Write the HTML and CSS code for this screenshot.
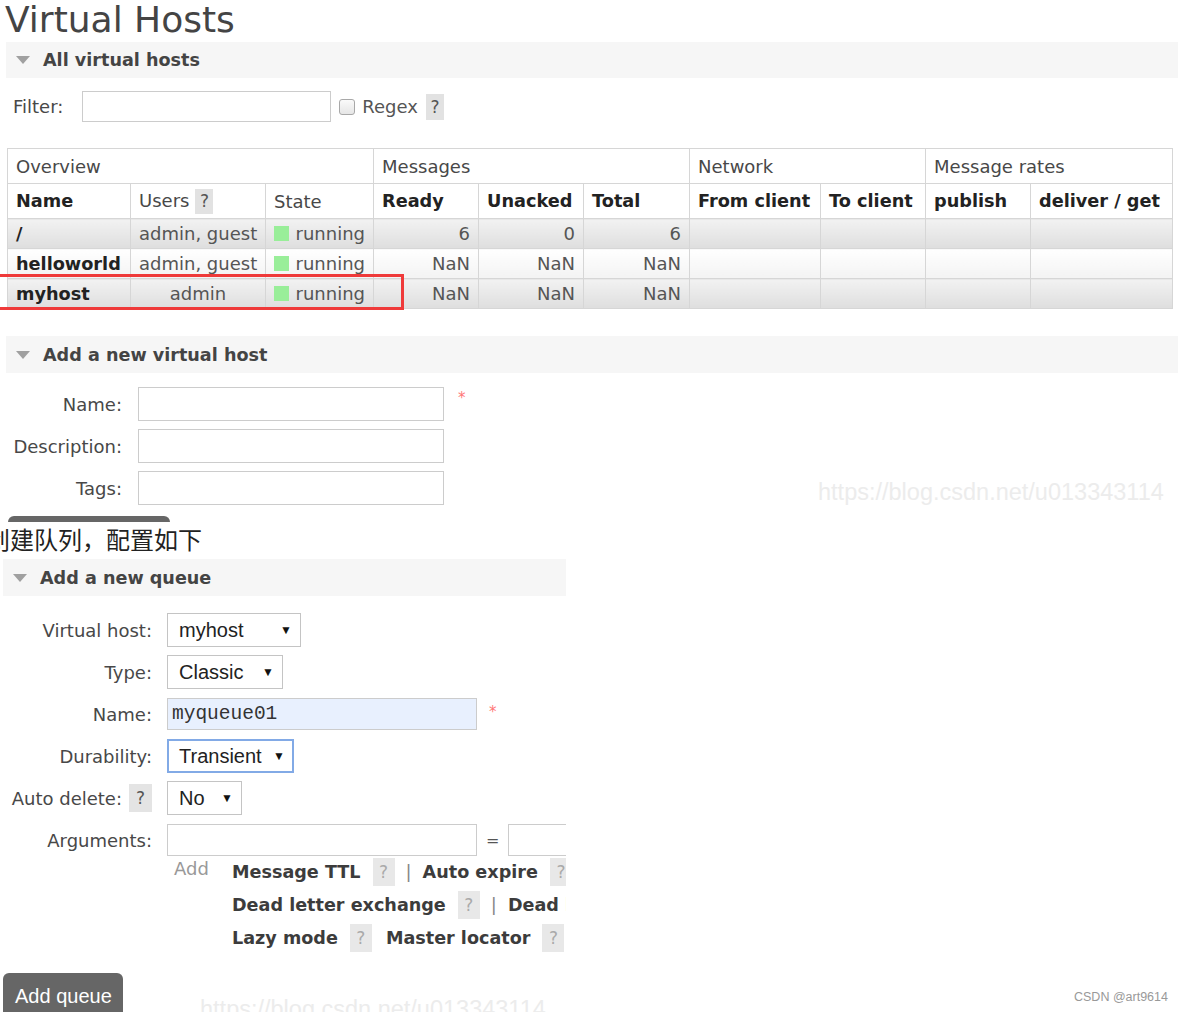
FILE: index.html
```html
<!DOCTYPE html>
<html lang="en">
<head>
<meta charset="utf-8">
<title>Virtual Hosts</title>
<link rel="stylesheet" href="styles.css">
</head>
<body>
<div class="page">
  <h1 class="title">Virtual Hosts</h1>

  <div class="section-bar wide">
    <span class="tri"></span><h2>All virtual hosts</h2>
  </div>

  <div class="filter">
    <span class="filter-label">Filter:</span>
    <span class="field filter-input"></span>
    <span class="checkbox"></span>
    <span class="regex">Regex</span>
    <span class="help">?</span>
  </div>

  <table class="list">
    <colgroup>
      <col class="c-name"><col class="c-users"><col class="c-state">
      <col class="c-num"><col class="c-num"><col class="c-total">
      <col class="c-from"><col class="c-num"><col class="c-num"><col class="c-deliver">
    </colgroup>
    <thead>
      <tr class="group-row">
        <th colspan="3">Overview</th>
        <th colspan="3">Messages</th>
        <th colspan="2">Network</th>
        <th colspan="2">Message rates</th>
      </tr>
      <tr class="head-row">
        <th class="b">Name</th>
        <th>Users<span class="help help-sm">?</span></th>
        <th>State</th>
        <th class="b">Ready</th>
        <th class="b">Unacked</th>
        <th class="b">Total</th>
        <th class="b">From client</th>
        <th class="b">To client</th>
        <th class="b">publish</th>
        <th class="b">deliver / get</th>
      </tr>
    </thead>
    <tbody>
      <tr class="alt1">
        <td class="name">/</td><td class="users">admin, guest</td>
        <td><span class="state"><span class="dot"></span>running</span></td>
        <td class="num">6</td><td class="num">0</td><td class="num">6</td>
        <td></td><td></td><td></td><td></td>
      </tr>
      <tr class="alt0">
        <td class="name">helloworld</td><td class="users">admin, guest</td>
        <td><span class="state"><span class="dot"></span>running</span></td>
        <td class="num">NaN</td><td class="num">NaN</td><td class="num">NaN</td>
        <td></td><td></td><td></td><td></td>
      </tr>
      <tr class="alt1">
        <td class="name">myhost</td><td class="users">admin</td>
        <td><span class="state"><span class="dot"></span>running</span></td>
        <td class="num">NaN</td><td class="num">NaN</td><td class="num">NaN</td>
        <td></td><td></td><td></td><td></td>
      </tr>
    </tbody>
  </table>

  <div class="section-bar wide bar-vh">
    <span class="tri"></span><h2>Add a new virtual host</h2>
  </div>

  <div class="vh-form">
    <span class="lbl">Name:</span><span class="field vh-input"></span><span class="req">*</span>
    <span class="lbl">Description:</span><span class="field vh-input"></span><span></span>
    <span class="lbl">Tags:</span><span class="field vh-input"></span><span></span>
  </div>
  <div class="btn-stub"></div>

  <p class="cn">创建队列，配置如下</p>

  <div class="queue-panel">
    <div class="section-bar q-bar">
      <span class="tri"></span><h2>Add a new queue</h2>
    </div>

    <div class="q-form">
      <span class="lbl">Virtual host:</span>
      <div class="ctl"><span class="select w-host"><span>myhost</span><span class="arrow">▼</span></span></div>

      <span class="lbl">Type:</span>
      <div class="ctl"><span class="select w-type"><span>Classic</span><span class="arrow">▼</span></span></div>

      <span class="lbl">Name:</span>
      <div class="ctl"><span class="field q-name">myqueue01</span><span class="req q-req">*</span></div>

      <span class="lbl">Durability:</span>
      <div class="ctl"><span class="select w-dur focus"><span>Transient</span><span class="arrow">▼</span></span></div>

      <span class="lbl">Auto delete: <span class="help help-q">?</span></span>
      <div class="ctl"><span class="select w-no"><span>No</span><span class="arrow">▼</span></span></div>

      <span class="lbl">Arguments:</span>
      <div class="ctl"><span class="field q-arg"></span><span class="eq">=</span><span class="field q-arg2"></span></div>
    </div>

    <div class="adds">
      <span class="add-link">Add</span>
      <div class="opts">
        <div class="opt-line"><b>Message TTL</b><span class="help help-o">?</span><span class="sep">|</span><b>Auto expire</b><span class="help help-o">?</span></div>
        <div class="opt-line"><b>Dead letter exchange</b><span class="help help-o">?</span><span class="sep">|</span><b>Dead letter routing key</b></div>
        <div class="opt-line"><b>Lazy mode</b><span class="help help-o">?</span><b class="ml">Master locator</b><span class="help help-o">?</span></div>
      </div>
    </div>

    <button class="add-queue" type="button">Add queue</button>
  </div>

  <div class="redbox"></div>
  <div class="wm wm1">https://blog.csdn.net/u013343114</div>
  <div class="wm wm2">https://blog.csdn.net/u013343114</div>
  <div class="csdn">CSDN @art9614</div>
</div>
</body>
</html>
```

FILE: styles.css
```css
* { box-sizing: border-box; }
html, body { margin: 0; padding: 0; background: #fff; }
.page {
  position: relative;
  width: 1184px;
  height: 1012px;
  overflow: hidden;
  font-family: "DejaVu Sans", Verdana, sans-serif;
  font-size: 18px;
  color: #484848;
}
.title {
  margin: 0;
  padding-left: 5px;
  height: 42px;
  font-size: 36px;
  line-height: 40px;
  font-weight: normal;
  color: #444;
}
.section-bar {
  display: flex;
  align-items: center;
  background: #f6f6f6;
  height: 36px;
}
.section-bar.wide { margin-left: 6px; margin-right: 6px; }
.section-bar h2 {
  margin: 0 0 0 13px;
  font-size: 17.6px;
  font-weight: bold;
  color: #444;
}
.tri {
  width: 0; height: 0;
  margin-left: 10px;
  border-left: 7px solid transparent;
  border-right: 7px solid transparent;
  border-top: 8px solid #a0a0a0;
}

/* filter */
.filter {
  display: flex;
  align-items: center;
  margin-top: 13px;
  padding-left: 13px;
  height: 31px;
}
.field {
  display: inline-block;
  border: 1px solid #ccc;
  background: #fff;
}
.filter-label { margin-right: 19px; }
.filter-input { width: 249px; height: 31px; }
.checkbox {
  width: 16px; height: 16px;
  margin-left: 8px;
  border: 1px solid #a8a8a8;
  border-radius: 3px;
  background: linear-gradient(#fafafa, #e6e6e6);
}
.regex { margin-left: 7px; color: #555; }
.help {
  display: inline-flex;
  align-items: center;
  justify-content: center;
  background: #e2e2e2;
  color: #555;
  width: 18px;
  height: 26px;
  margin-left: 8px;
  font-size: 17px;
}

/* table */
.list {
  margin: 26px 0 0 7px;
  width: 1165px;
  table-layout: fixed;
  border-collapse: collapse;
  border: 1px solid #d6d6d6;
}
.c-name { width: 123px; }
.c-users { width: 135px; }
.c-state { width: 108px; }
.c-num { width: 105px; }
.c-total { width: 106px; }
.c-from { width: 131px; }
.c-deliver { width: 142px; }
.list th, .list td {
  border: 1px solid #d6d6d6;
  padding: 0 8px;
  white-space: nowrap;
  overflow: hidden;
}
.list th { text-align: left; font-weight: normal; color: #484848; }
.group-row th { height: 35px; }
.head-row th { height: 35px; }
.head-row th.b { font-weight: bold; color: #222; font-size: 17.7px; }
.help-sm { height: 25px; margin-left: 6px; vertical-align: middle; }
.list td { height: 30px; color: #555; }
.alt1 td { background: linear-gradient(#f2f2f2, #dedede); }
.alt0 td { background: linear-gradient(#ffffff, #f3f3f3); }
.list td.name { font-weight: bold; color: #222; font-size: 17.7px; }
.list td.users { text-align: center; }
.list td.num { text-align: right; }
.state { display: flex; align-items: center; }
.dot {
  width: 15px; height: 15px;
  background: #99ee99;
  margin-right: 7px;
}

/* add vhost */
.section-bar.bar-vh { margin-top: 27px; height: 37px; }
.vh-form {
  display: grid;
  grid-template-columns: 122px 306px 30px;
  column-gap: 16px;
  row-gap: 8px;
  margin-top: 14px;
}
.vh-form .lbl, .q-form .lbl {
  display: flex;
  align-items: center;
  justify-content: flex-end;
  color: #484848;
}
.vh-input { height: 34px; }
.req { color: #f77; font-size: 15px; margin-left: -2px; padding-top: 2px; }
.btn-stub {
  margin: 11px 0 0 8px;
  width: 162px;
  height: 6px;
  background: #666;
  border-radius: 8px 8px 0 0;
}
.cn {
  margin: -1px 0 0 -14px;
  font-family: "Noto Sans CJK SC", sans-serif;
  font-size: 24px;
  line-height: 36px;
  color: #222;
}

/* queue panel */
.queue-panel {
  width: 566px;
  overflow: hidden;
  padding-top: 2px;
}
.section-bar.q-bar { margin-left: 3px; height: 37px; }
.q-bar h2 { font-size: 17.6px; }
.q-form {
  display: grid;
  grid-template-columns: 152px 1fr;
  column-gap: 15px;
  row-gap: 8px;
  margin-top: 17px;
  grid-auto-rows: 34px;
}
.ctl { display: flex; align-items: center; white-space: nowrap; }
.select {
  display: inline-flex;
  align-items: center;
  justify-content: space-between;
  height: 34px;
  padding: 0 8px 0 11px;
  border: 1px solid #c4c4c4;
  background: #fff;
  font-family: "Liberation Sans", Arial, sans-serif;
  font-size: 20px;
  color: #222;
}
.select.focus { border: 2px solid #82aae6; padding-left: 10px; padding-right: 7px; }
.arrow { font-size: 12px; color: #111; }
.w-host { width: 134px; }
.w-type { width: 116px; }
.w-dur { width: 127px; }
.w-no { width: 75px; }
.q-name {
  width: 310px; height: 32px;
  background: #e8f0fe;
  display: flex; align-items: center;
  padding-left: 4px;
  font-family: "Liberation Mono", "Courier New", monospace;
  font-size: 19.5px;
  color: #333;
}
.q-req { margin-left: 12px; align-self: flex-start; padding-top: 6px; }
.help-q { margin-left: 7px; width: 23px; height: 28px; background: #e4e4e4; }
.q-arg { width: 310px; height: 32px; flex: none; }
.eq { margin: 0 9px; font-size: 16px; color: #555; }
.q-arg2 { width: 120px; height: 32px; flex: none; }

.adds {
  display: flex;
  margin-top: -2px;
  white-space: nowrap;
}
.add-link { flex: none; margin-left: 174px; width: 58px; color: #999; line-height: 28px; }
.opts { display: flex; flex-direction: column; flex: none; }
.opt-line {
  display: flex;
  align-items: center;
  height: 33px;
}
.opt-line b { color: #3c3c3c; font-size: 17.6px; flex: none; }
.help-o {
  flex: none;
  width: 22px; height: 28px;
  margin-left: 12px;
  background: #e8e8e8;
  color: #aaa;
}
.sep { margin: 0 11px 0 11px; color: #888; }
.ml { margin-left: 14px; }
.add-queue {
  display: block;
  margin: 19px 0 0 3px;
  width: 120px;
  height: 46px;
  padding: 11px 0 11px 12px;
  text-align: left;
  border: none;
  border-radius: 6px;
  background: #666;
  color: #fff;
  font-family: "Liberation Sans", Arial, sans-serif;
  font-size: 20px;
  line-height: 24px;
}

/* overlays */
.redbox {
  position: absolute;
  left: -3px;
  top: 274px;
  width: 407px;
  height: 36px;
  border: 3px solid #ef3a3a;
}
.wm {
  position: absolute;
  font-family: "Liberation Sans", Arial, sans-serif;
  font-size: 23.5px;
  line-height: 28px;
  color: #ececec;
  white-space: nowrap;
}
.wm1 { left: 818px; top: 478px; }
.wm2 { left: 200px; top: 995px; }
.csdn {
  position: absolute;
  left: 1074px;
  top: 989px;
  font-family: "Liberation Sans", Arial, sans-serif;
  font-size: 12.5px;
  line-height: 16px;
  color: #999;
}
```
